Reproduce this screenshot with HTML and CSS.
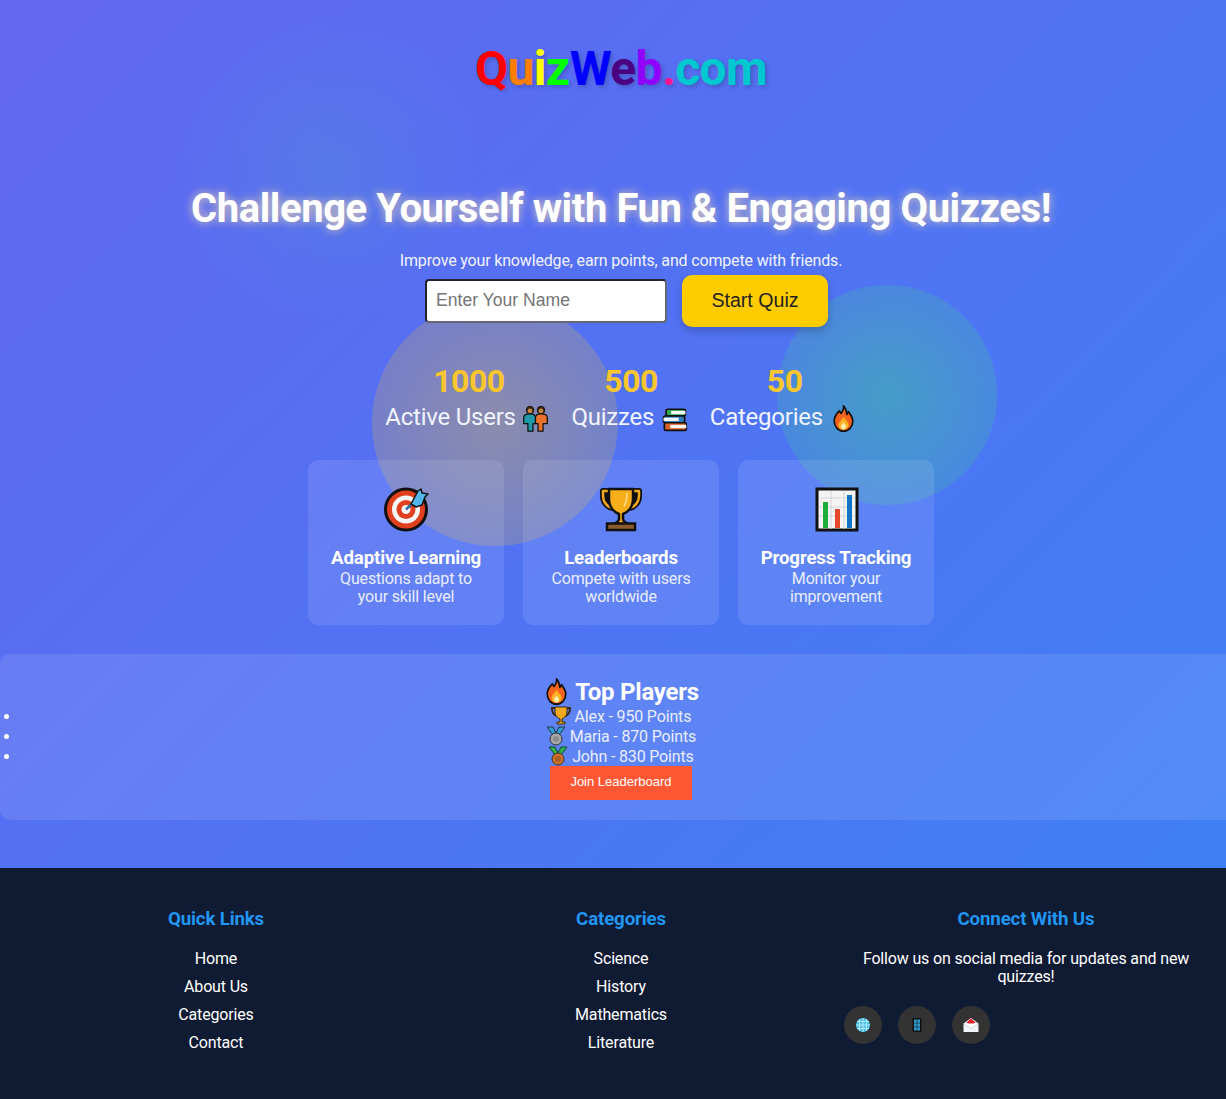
FILE: index.html
```html
<!DOCTYPE html>
<html lang="en">
<head>
<meta charset="utf-8">
<title>QuizWeb.com</title>
<link rel="stylesheet" href="styles.css">
</head>
<body>
<svg class="defs" width="0" height="0" aria-hidden="true">
<defs>
<symbol id="i-fire" viewBox="0 0 32 32">
<path d="M16 1c1 4-1 6-3 9-1-1-1-2-2-3-3 3-6 7-6 12 0 7 5 12 11 12s11-5 11-12c0-5-3-8-5-11-.5 1-1 2-2 3-.5-4-2-8-4-10z" fill="#f4631e" stroke="#111" stroke-width="2" stroke-linejoin="round"/>
<path d="M16 13c0 4-6 6-6 11 0 3 3 5 6 5s6-2 6-5c0-5-5-7-6-11z" fill="#fbb11f"/>
<path d="M16 20c-1 2-3 3-3 5.500s1 3.500 3 3.500 3-1 3-3.500-2-3.500-3-5.500z" fill="#ffe9a8"/>
</symbol>
<symbol id="i-people" viewBox="0 0 32 32">
<circle cx="9.500" cy="6" r="4.500" fill="#3a2414" stroke="#111" stroke-width="1"/>
<circle cx="22.500" cy="6" r="4.500" fill="#3a2414" stroke="#111" stroke-width="1"/>
<circle cx="9.500" cy="7" r="2.800" fill="#c68642"/>
<circle cx="22.500" cy="7" r="2.800" fill="#c68642"/>
<path d="M2 22v-7c0-3 3-4.500 7.500-4.500S16 12 16 15v7h-3v9H7v-9z" fill="#1d9aa8" stroke="#111" stroke-width="1.500" stroke-linejoin="round"/>
<path d="M16 22v-7c0-3 2-4.500 6.500-4.500S30 12 30 15v7h-5v9h-6v-9z" fill="#e8722a" stroke="#111" stroke-width="1.500" stroke-linejoin="round"/>
</symbol>
<symbol id="i-books" viewBox="0 0 32 32">
<rect x="6" y="5" width="23" height="8" rx="2" fill="#2fa84f" stroke="#111" stroke-width="2"/>
<rect x="12" y="7" width="17" height="4" fill="#f4f4f4"/>
<rect x="3" y="13" width="25" height="8" rx="2" fill="#2e7fc1" stroke="#111" stroke-width="2"/>
<rect x="3" y="15" width="18" height="4" fill="#f4f4f4"/>
<rect x="4" y="21" width="26" height="9" rx="2" fill="#d9622b" stroke="#111" stroke-width="2"/>
<rect x="11" y="23.500" width="19" height="4" fill="#f4f4f4"/>
</symbol>
<symbol id="i-target" viewBox="0 0 48 48">
<circle cx="24" cy="24.500" r="20.500" fill="#e0401e" stroke="#111" stroke-width="3"/>
<circle cx="24" cy="24.500" r="14" fill="#f6f6f6"/>
<circle cx="24" cy="24.500" r="9.500" fill="#e0401e"/>
<circle cx="24" cy="24.500" r="4.500" fill="#f6f6f6"/>
<path d="M24 24.500 34 15" stroke="#2a6fa8" stroke-width="2.500"/>
<path d="M29 19 36 6l3-2 1 4 6 1-3 3-3 8-6 2z" fill="#52b8ec" stroke="#111" stroke-width="1.500" stroke-linejoin="round"/>
</symbol>
<symbol id="i-trophy" viewBox="0 0 48 48">
<path d="M12 6H6v5c0 6 4 11 10 12M36 6h6v5c0 6-4 11-10 12" fill="#111" stroke="#111" stroke-width="6" stroke-linejoin="round"/>
<path d="M12 6H6v5c0 6 4 11 10 12M36 6h6v5c0 6-4 11-10 12" fill="#111" stroke="#f2a81d" stroke-width="2.500" stroke-linejoin="round"/>
<path d="M12 4h24v10c0 8-5 13-10 15v5c0 2 3 4 6 5H16c3-1 6-3 6-5v-5c-5-2-10-7-10-15z" fill="#f7ae1b" stroke="#111" stroke-width="2.500" stroke-linejoin="round"/>
<path d="M30 8c0 6-1 10-3 13" fill="none" stroke="#ffe08a" stroke-width="1.500"/>
<rect x="10" y="38.500" width="28" height="6.500" fill="#8d5a2b" stroke="#111" stroke-width="2.500"/>
</symbol>
<symbol id="i-chart" viewBox="0 0 48 48">
<rect x="5" y="4" width="40" height="41" fill="#f4f4f4" stroke="#111" stroke-width="3"/>
<path d="M7 13h36M7 22h36M7 31h36M19 6v38M32 6v38" stroke="#d6d6d6" stroke-width="1"/>
<rect x="11" y="17" width="5" height="26" fill="#1fae3a"/>
<rect x="23" y="24" width="5" height="19" fill="#e4492c"/>
<rect x="35" y="10" width="5" height="33" fill="#1273c4"/>
</symbol>
<symbol id="i-trophy-sm" viewBox="0 0 20 20">
<path d="M4 2H1c0 4 1 7 5 8M16 2h3c0 4-1 7-5 8" fill="none" stroke="#3a2a10" stroke-width="2"/>
<path d="M4 1h12v5c0 4-3 6-5 7v3h3v2H6v-2h3v-3C7 12 4 10 4 6z" fill="#f2a91e" stroke="#3a2a10" stroke-width="1"/>
</symbol>
<symbol id="i-silver" viewBox="0 0 20 20">
<path d="M1 1h6l4 8H7zM19 1h-6L9 9h4z" fill="#2e9fd0" stroke="#234" stroke-width="1"/>
<circle cx="10" cy="13" r="6" fill="#a8a8a8" stroke="#333" stroke-width="1"/>
<circle cx="10" cy="13" r="3" fill="#8c8c8c"/>
</symbol>
<symbol id="i-bronze" viewBox="0 0 20 20">
<path d="M1 1h6l4 8H7zM19 1h-6L9 9h4z" fill="#2fb04a" stroke="#143" stroke-width="1"/>
<circle cx="10" cy="13" r="6" fill="#c9702e" stroke="#432" stroke-width="1"/>
<circle cx="10" cy="13" r="3" fill="#b05c22"/>
</symbol>
<symbol id="i-globe" viewBox="0 0 16 16">
<circle cx="8" cy="8" r="7" fill="#4cc4ee"/>
<path d="M1 8h14M2 4.500h12M2 11.500h12M8 1v14M4.500 2v12M11.500 2v12" stroke="#c8effb" stroke-width=".8"/>
</symbol>
<symbol id="i-phone" viewBox="0 0 16 16">
<rect x="3.500" y="1" width="9" height="14" rx="1" fill="#111"/>
<rect x="5" y="2.500" width="6" height="11" fill="#2e9bc9"/>
<path d="M5 6h6M5 10h6M8 2.500v11" stroke="#123" stroke-width=".6"/>
</symbol>
<symbol id="i-mail" viewBox="0 0 16 16">
<path d="M.5 6.500 8 1l7.500 5.500-7.500 5z" fill="#f1f4f8"/>
<path d="M3.500 5.500 8 1.500l4.500 4-4.500 3z" fill="#e0202c"/>
<rect x=".5" y="7" width="15" height="8" fill="#f1f4f8"/>
<path d="M.5 6.500 8 11.500l7.500-5" fill="#fff" stroke="#b9c3cf" stroke-width=".6"/>
</symbol>
</defs>
</svg>
<div class="page">
<div class="blob blob-a"></div>
<div class="blob blob-b"></div>
<div class="blob blob-c"></div>
<main class="main">
<header class="brand">
<h1 class="logo"><span class="c1">Q</span><span class="c2">u</span><span class="c3">i</span><span class="c4">z</span><span class="c5">W</span><span class="c6">e</span><span class="c7">b</span><span class="c8">.</span><span class="c9">com</span></h1>
</header>
<section class="hero">
<h2 class="headline">Challenge Yourself with Fun &amp; Engaging Quizzes!</h2>
<p class="lead">Improve your knowledge, earn points, and compete with friends.</p>
<form class="start">
<input class="name" type="text" placeholder="Enter Your Name">
<button class="go" type="button">Start Quiz</button>
</form>
<div class="stats">
<div class="stat"><div class="num">1000</div><div class="lab">Active Users <svg class="em24"><use href="#i-people"/></svg></div></div>
<div class="stat"><div class="num">500</div><div class="lab">Quizzes <svg class="em24"><use href="#i-books"/></svg></div></div>
<div class="stat"><div class="num">50</div><div class="lab">Categories <svg class="em24"><use href="#i-fire"/></svg></div></div>
</div>
<div class="cards">
<article class="card"><svg class="em48"><use href="#i-target"/></svg><h3>Adaptive Learning</h3><p>Questions adapt to your skill level</p></article>
<article class="card"><svg class="em48"><use href="#i-trophy"/></svg><h3>Leaderboards</h3><p>Compete with users worldwide</p></article>
<article class="card"><svg class="em48"><use href="#i-chart"/></svg><h3>Progress Tracking</h3><p>Monitor your improvement</p></article>
</div>
</section>
<section class="board">
<h2 class="board-title"><svg class="em24 em-top"><use href="#i-fire"/></svg> Top Players</h2>
<ul class="players">
<li><svg class="em18"><use href="#i-trophy-sm"/></svg> Alex - 950 Points</li>
<li><svg class="em18"><use href="#i-silver"/></svg> Maria - 870 Points</li>
<li><svg class="em18"><use href="#i-bronze"/></svg> John - 830 Points</li>
</ul>
<button class="join" type="button">Join Leaderboard</button>
</section>
</main>
<footer class="foot">
<div class="col"><h4>Quick Links</h4><ul><li>Home</li><li>About Us</li><li>Categories</li><li>Contact</li></ul></div>
<div class="col"><h4>Categories</h4><ul><li>Science</li><li>History</li><li>Mathematics</li><li>Literature</li></ul></div>
<div class="col"><h4>Connect With Us</h4><p>Follow us on social media for updates and new quizzes!</p>
<div class="social"><a><svg class="em16"><use href="#i-globe"/></svg></a><a><svg class="em16"><use href="#i-phone"/></svg></a><a><svg class="em16"><use href="#i-mail"/></svg></a></div></div>
</footer>
</div>
</body>
</html>
```
FILE: styles.css
```css
* { box-sizing: border-box; }
html { overflow-x: hidden; }
body { margin: 0; width: 1226px; height: 1099px; overflow: hidden; font-family: Roboto, "Liberation Sans", sans-serif; letter-spacing: -.16px; color: #fff; }
.defs { position: absolute; }
.page { position: relative; width: 1242px; height: 1099px; display: flex; flex-direction: column; background: linear-gradient(135deg, #6366f1 0%, #3b82f6 100%); overflow: hidden; }
.blob { position: absolute; border-radius: 50%; }
.blob-a { left: 165px; top: 5px; width: 320px; height: 320px; background: radial-gradient(circle, rgba(70,170,190,.2), rgba(70,170,190,0) 70%); }
.blob-b { left: 372px; top: 300px; width: 246px; height: 246px; background: radial-gradient(circle, rgba(245,190,40,.35), rgba(245,190,40,.15)); }
.blob-c { left: 777px; top: 285px; width: 220px; height: 220px; background: radial-gradient(circle, rgba(60,210,140,.42), rgba(60,210,140,.12)); }
.main { position: relative; flex: 1; text-align: center; }
.brand { height: 138px; padding-top: 41px; }
.logo { margin: 0; font-size: 48px; line-height: 56px; font-weight: 700; letter-spacing: -.65px; text-shadow: 2px 2px 4px rgba(0,0,0,.2); }
.c1 { color: #f00; } .c2 { color: #ff7f00; } .c3 { color: #ff0; } .c4 { color: #0f0; } .c5 { color: #00f; } .c6 { color: #4b0082; } .c7 { color: #8f00ff; } .c8 { color: #ff1493; } .c9 { color: #00c8d0; }
.hero { padding-top: 47px; }
.headline { margin: 0; font-size: 40px; line-height: 47px; font-weight: 700; letter-spacing: -.42px; text-shadow: 0 0 10px rgba(255,225,170,.8); }
.lead { margin: 19px 0 0; font-size: 16px; line-height: 19px; color: #f0f3ff; }
.start { display: flex; justify-content: center; align-items: center; gap: 15px; margin-top: 5px; padding-left: 11px; }
.name { width: 242px; height: 44px; padding: 0 9px 2px; font: 17.6px "Liberation Sans", Arial, sans-serif; letter-spacing: 0; border: 2px solid; border-color: #223 #667 #667 #223; border-radius: 4px; background: #fff; }
.name::placeholder { color: #757575; }
.go { width: 146px; height: 52px; padding: 0 0 2px; border: 0; border-radius: 10px; background: #ffcc00; color: #222; font: 19.6px "Liberation Sans", Arial, sans-serif; letter-spacing: 0; box-shadow: 0 4px 8px rgba(0,0,0,.2); }
.stats { display: flex; justify-content: center; gap: 22px; margin-top: 36px; }
.num { padding-left: 3px; font-size: 32px; line-height: 37px; font-weight: 700; letter-spacing: -.5px; color: #f9c62d; }
.lab { height: 34px; font-size: 24px; line-height: 34px; letter-spacing: -.24px; color: #f0f4ff; white-space: nowrap; }
.em24 { width: 27px; height: 27px; margin-left: 1px; vertical-align: -7px; }
.em-top { margin-left: 0; vertical-align: -5px; }
.cards { display: flex; justify-content: center; gap: 19px; margin-top: 26px; }
.card { width: 196px; height: 165px; padding: 25px 20px 0; border-radius: 10px; background: rgba(255,255,255,.1); }
.em48 { display: block; width: 48px; height: 48px; margin: 0 auto; }
.card h3 { margin: 15px 0 0; font-size: 18.72px; line-height: 21px; font-weight: 700; }
.card p { margin: 1px 0 0; font-size: 16px; line-height: 18px; color: #e8eeff; }
.board { margin-top: 29px; height: 166px; padding: 24px 21px 0; border-radius: 10px; background: rgba(255,255,255,.1); }
.board-title { margin: 0; height: 28px; font-size: 24px; line-height: 28px; font-weight: 700; letter-spacing: -.24px; }
.players { margin: 0; padding: 0; font-size: 16px; color: #e8eeff; }
.players li { height: 20px; line-height: 20px; }
.players li::marker { color: #fff; }
.em18 { width: 20px; height: 20px; vertical-align: -4px; }
.join { display: inline-block; width: 142px; height: 34px; padding: 0 0 3px; border: 0; background: #ff5733; color: #fff; font: 13px "Liberation Sans", Arial, sans-serif; letter-spacing: 0; }
.foot { display: grid; grid-template-columns: repeat(3, 392px); gap: 13px; padding: 41px 20px 0; height: 231px; background: #0f1a33; text-align: center; }
.col { padding: 0 14px; }
.col h4 { margin: 0 0 15px; font-size: 18.72px; line-height: 21px; font-weight: 700; color: #2196f3; }
.col ul { margin: 0; padding: 0; list-style: none; }
.col li { font-size: 16px; line-height: 28px; }
.col p { margin: 20px 0 0; font-size: 16px; line-height: 18px; }
.social { display: flex; gap: 16px; margin-top: 20px; }
.social a { width: 38px; height: 38px; display: flex; align-items: center; justify-content: center; border-radius: 50%; background: #333; }
.em16 { width: 16px; height: 16px; }
```
